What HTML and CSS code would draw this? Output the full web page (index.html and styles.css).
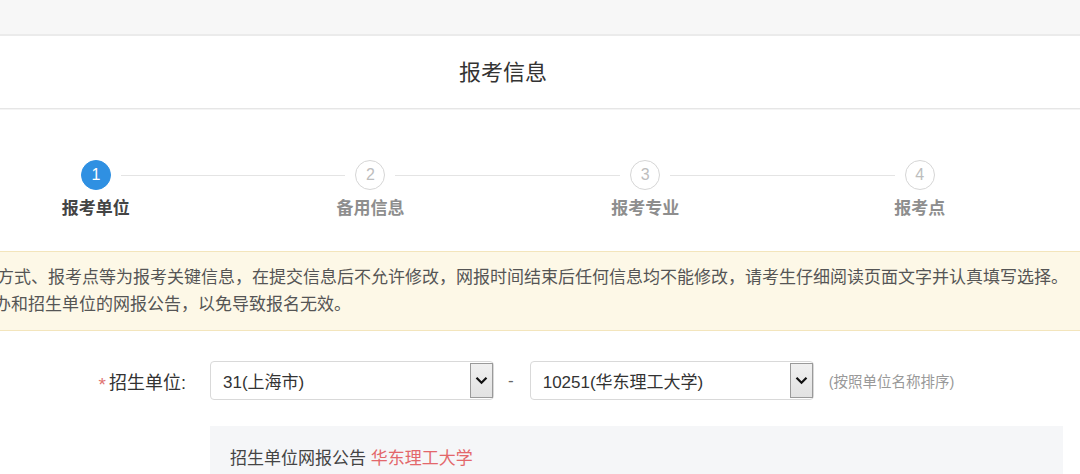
FILE: index.html
```html
<!DOCTYPE html>
<html lang="zh-CN">
<head>
<meta charset="utf-8">
<title>报考信息</title>
<link rel="stylesheet" href="styles.css">
</head>
<body>
<div class="topbar"></div>
<div class="header"><h1 class="title">报考信息</h1></div>

<div class="steps">
  <div class="step active">
    <div class="step-track"><span class="track track-hidden"></span><span class="circle">1</span><span class="track"></span></div>
    <div class="step-label">报考单位</div>
  </div>
  <div class="step">
    <div class="step-track"><span class="track"></span><span class="circle">2</span><span class="track"></span></div>
    <div class="step-label">备用信息</div>
  </div>
  <div class="step">
    <div class="step-track"><span class="track"></span><span class="circle">3</span><span class="track"></span></div>
    <div class="step-label">报考专业</div>
  </div>
  <div class="step">
    <div class="step-track"><span class="track"></span><span class="circle">4</span><span class="track track-hidden"></span></div>
    <div class="step-label">报考点</div>
  </div>
</div>

<div class="notice">
  <div class="notice-line first">单位、考试方式、报考点等为报考关键信息，在提交信息后不允许修改，网报时间结束后任何信息均不能修改，请考生仔细阅读页面文字并认真填写选择。</div>
  <div class="notice-line">查阅省招考办和招生单位的网报公告，以免导致报名无效。</div>
</div>

<div class="form-row">
  <label class="form-label"><span class="req">*</span>招生单位:</label>
  <div class="select">
    <span class="select-text">31(上海市)</span>
    <span class="select-btn"><svg width="13" height="9" viewBox="0 0 13 9"><path d="M1.5 1.8 L6.5 6.8 L11.5 1.8" fill="none" stroke="#111" stroke-width="2.2"/></svg></span>
  </div>
  <span class="dash">-</span>
  <div class="select">
    <span class="select-text">10251(华东理工大学)</span>
    <span class="select-btn"><svg width="13" height="9" viewBox="0 0 13 9"><path d="M1.5 1.8 L6.5 6.8 L11.5 1.8" fill="none" stroke="#111" stroke-width="2.2"/></svg></span>
  </div>
  <span class="hint">(按照单位名称排序)</span>
</div>

<div class="announce">
  <span class="announce-title">招生单位网报公告</span> <span class="announce-name">华东理工大学</span>
</div>
</body>
</html>
```

FILE: styles.css
```css
* { box-sizing: border-box; }
html, body { margin: 0; padding: 0; }
body {
  width: 1080px;
  height: 474px;
  overflow: hidden;
  background: #fff;
  font-family: "Liberation Sans", "Noto Sans CJK SC", sans-serif;
  color: #333;
}
.topbar {
  height: 36px;
  background: #f7f7f7;
  border-bottom: 2px solid #ebebeb;
}
.header {
  height: 73px;
  border-bottom: 1px solid #e6e6e6;
  padding-right: 74px;
  box-shadow: 0 1px 0 #f4f4f4;
}
.title {
  margin: 0;
  text-align: center;
  font-size: 22px;
  font-weight: normal;
  line-height: 74px;
  color: #333;
}
.steps {
  display: grid;
  grid-template-columns: repeat(4, 274.67px);
  margin: 51px 0 0 -41.5px;
}
.step {
  display: flex;
  flex-direction: column;
  align-items: center;
}
.step-track {
  display: flex;
  align-items: center;
  width: 100%;
  height: 30px;
}
.track {
  flex: 1;
  height: 1px;
  background: #e4e4e4;
}
.track:first-child { margin-right: 10px; }
.track:last-child { margin-left: 10px; }
.track-hidden { background: transparent; }
.circle {
  width: 30px;
  height: 30px;
  border-radius: 50%;
  border: 1px solid #d6d6d6;
  background: #fff;
  color: #bdbdbd;
  font-size: 16px;
  display: flex;
  align-items: center;
  justify-content: center;
}
.step.active .circle {
  background: #2f90e2;
  border-color: #2f90e2;
  color: #fff;
}
.step-label {
  margin-top: 8px;
  font-size: 17px;
  line-height: 22px;
  font-weight: bold;
  color: #8e8e8e;
}
.step.active .step-label { color: #444; }

.notice {
  margin: 31px -20px 0 -112px;
  padding: 12px 20px;
  background: #fdf8e7;
  border: 1px solid #f3e5bc;
  font-size: 17px;
  line-height: 27px;
  color: #555;
}
.notice-line { white-space: nowrap; }
.notice-line.first { padding-left: 3px; }

.form-row {
  display: flex;
  align-items: center;
  margin-top: 30px;
  height: 39px;
}
.form-label {
  width: 186px;
  margin-right: 24px;
  text-align: right;
  font-size: 18px;
  color: #333;
  white-space: nowrap;
}
.req {
  color: #e07272;
  font-size: 19px;
  margin-right: 3px;
  position: relative;
  top: 2px;
}
.select {
  width: 284px;
  height: 39px;
  border: 1px solid #d9d9d9;
  border-radius: 4px;
  background: #fff;
  display: flex;
  align-items: center;
  padding-left: 12px;
}
.select-text {
  flex: 1;
  font-size: 17px;
  color: #333;
  white-space: nowrap;
}
.select-btn {
  width: 23px;
  height: 35px;
  border: 1px solid #9a9a9a;
  background: linear-gradient(#f0f0f0, #e2e2e2);
  display: flex;
  align-items: center;
  justify-content: center;
}
.dash {
  margin: 0 16px 0 14px;
  font-size: 17px;
  color: #666;
}
.hint {
  margin-left: 15px;
  font-size: 14.5px;
  color: #999;
  white-space: nowrap;
}
.announce {
  margin: 26px 0 0 210px;
  width: 853px;
  height: 48px;
  padding: 21px 20px 0;
  background: #f5f6f8;
  font-size: 17px;
  line-height: 24px;
  color: #444;
}
.announce-name { color: #e3676b; }
```
